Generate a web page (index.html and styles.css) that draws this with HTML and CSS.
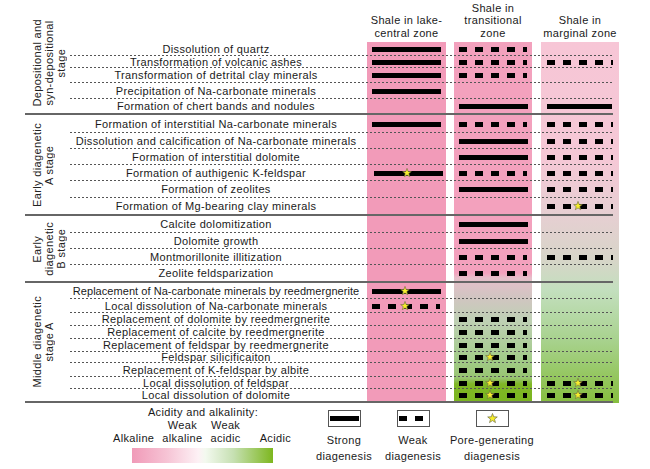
FILE: index.html
```html
<!DOCTYPE html>
<html lang="en">
<head>
<meta charset="utf-8">
<title>Diagenesis chart</title>
<link rel="stylesheet" href="styles.css">
</head>
<body>
<div class="chart">
  <div class="head h1">Shale in lake-<br>central zone</div>
  <div class="head h2">Shale in<br>transitional<br>zone</div>
  <div class="head h3">Shale in<br>marginal zone</div>

  <div class="zone z1"></div>
  <div class="zone z2"></div>
  <div class="zone z3"></div>

  <div class="sections">
    <div class="section">
      <div class="stage up"><span>Depositional and<br>syn-depositional<br>stage</span></div>
      <div class="rows">
        <div class="row h14"><div class="label">Dissolution of quartz</div><div class="cell c1"><i class="bar strong"></i></div><div class="cell c2"><i class="bar weak"></i></div><div class="cell c3"></div></div>
        <div class="row h12"><div class="label">Transformation of volcanic ashes</div><div class="cell c1"><i class="bar strong"></i></div><div class="cell c2"><i class="bar weak"></i></div><div class="cell c3"><i class="bar weak"></i></div></div>
        <div class="row h15"><div class="label">Transformation of detrital clay minerals</div><div class="cell c1"><i class="bar strong"></i></div><div class="cell c2"><i class="bar weak"></i></div><div class="cell c3"></div></div>
        <div class="row h16"><div class="label">Precipitation of Na-carbonate minerals</div><div class="cell c1"><i class="bar strong"></i></div><div class="cell c2"></div><div class="cell c3"></div></div>
        <div class="row h14"><div class="label">Formation of chert bands and nodules</div><div class="cell c1"></div><div class="cell c2"><i class="bar strong"></i></div><div class="cell c3"><i class="bar strong"></i></div></div>
      </div>
    </div>

    <div class="section">
      <div class="stage"><span>Early diagenetic<br>A stage</span></div>
      <div class="rows">
        <div class="row h18"><div class="label">Formation of interstitial Na-carbonate minerals</div><div class="cell c1"><i class="bar strong"></i></div><div class="cell c2"><i class="bar weak"></i></div><div class="cell c3"><i class="bar weak"></i></div></div>
        <div class="row h16"><div class="label">Dissolution and calcification of Na-carbonate minerals</div><div class="cell c1"></div><div class="cell c2"><i class="bar strong"></i></div><div class="cell c3"><i class="bar weak"></i></div></div>
        <div class="row h16"><div class="label">Formation of interstitial dolomite</div><div class="cell c1"></div><div class="cell c2"><i class="bar strong"></i></div><div class="cell c3"><i class="bar weak"></i></div></div>
        <div class="row h16"><div class="label">Formation of authigenic K-feldspar</div><div class="cell c1"><i class="bar strong shift"><svg class="star" viewBox="0 0 10 10"><polygon points="5,0.4 6.12,3.46 9.37,3.58 6.81,5.59 7.7,8.72 5,6.9 2.3,8.72 3.19,5.59 0.63,3.58 3.88,3.46"/></svg></i></div><div class="cell c2"><i class="bar weak"></i></div><div class="cell c3"><i class="bar weak"></i></div></div>
        <div class="row h17"><div class="label">Formation of zeolites</div><div class="cell c1"></div><div class="cell c2"><i class="bar strong"></i></div><div class="cell c3"><i class="bar weak"></i></div></div>
        <div class="row h16"><div class="label">Formation of Mg-bearing clay minerals</div><div class="cell c1"></div><div class="cell c2"></div><div class="cell c3"><i class="bar weak"><svg class="star" viewBox="0 0 10 10"><polygon points="5,0.4 6.12,3.46 9.37,3.58 6.81,5.59 7.7,8.72 5,6.9 2.3,8.72 3.19,5.59 0.63,3.58 3.88,3.46"/></svg></i></div></div>
      </div>
    </div>

    <div class="section">
      <div class="stage"><span>Early<br>diagenetic<br>B stage</span></div>
      <div class="rows">
        <div class="row h17"><div class="label">Calcite dolomitization</div><div class="cell c1"></div><div class="cell c2"><i class="bar strong"></i></div><div class="cell c3"></div></div>
        <div class="row h16"><div class="label">Dolomite growth</div><div class="cell c1"></div><div class="cell c2"><i class="bar strong"></i></div><div class="cell c3"></div></div>
        <div class="row h16"><div class="label">Montmorillonite illitization</div><div class="cell c1"></div><div class="cell c2"><i class="bar weak"></i></div><div class="cell c3"><i class="bar weak"></i></div></div>
        <div class="row h16"><div class="label">Zeolite feldsparization</div><div class="cell c1"></div><div class="cell c2"><i class="bar weak"></i></div><div class="cell c3"></div></div>
      </div>
    </div>

    <div class="section">
      <div class="stage"><span>Middle diagenetic<br>stage A</span></div>
      <div class="rows">
        <div class="row h16"><div class="label tight">Replacement of Na-carbonate minerals by reedmergnerite</div><div class="cell c1"><i class="bar strong"><svg class="star" viewBox="0 0 10 10"><polygon points="5,0.4 6.12,3.46 9.37,3.58 6.81,5.59 7.7,8.72 5,6.9 2.3,8.72 3.19,5.59 0.63,3.58 3.88,3.46"/></svg></i></div><div class="cell c2"></div><div class="cell c3"></div></div>
        <div class="row h14"><div class="label">Local dissolution of Na-carbonate minerals</div><div class="cell c1"><i class="bar weak"><svg class="star" viewBox="0 0 10 10"><polygon points="5,0.4 6.12,3.46 9.37,3.58 6.81,5.59 7.7,8.72 5,6.9 2.3,8.72 3.19,5.59 0.63,3.58 3.88,3.46"/></svg></i></div><div class="cell c2"></div><div class="cell c3"></div></div>
        <div class="row h13"><div class="label">Replacement of dolomite by reedmergnerite</div><div class="cell c1"></div><div class="cell c2"><i class="bar weak"></i></div><div class="cell c3"></div></div>
        <div class="row h13"><div class="label">Replacement of calcite by reedmergnerite</div><div class="cell c1"></div><div class="cell c2"><i class="bar weak"></i></div><div class="cell c3"></div></div>
        <div class="row h13"><div class="label">Replacement of feldspar by reedmergnerite</div><div class="cell c1"></div><div class="cell c2"><i class="bar weak"></i></div><div class="cell c3"></div></div>
        <div class="row h11"><div class="label">Feldspar silicificaiton</div><div class="cell c1"></div><div class="cell c2"><i class="bar weak"><svg class="star" viewBox="0 0 10 10"><polygon points="5,0.4 6.12,3.46 9.37,3.58 6.81,5.59 7.7,8.72 5,6.9 2.3,8.72 3.19,5.59 0.63,3.58 3.88,3.46"/></svg></i></div><div class="cell c3"></div></div>
        <div class="row h14"><div class="label">Replacement of K-feldspar by albite</div><div class="cell c1"></div><div class="cell c2"><i class="bar weak"></i></div><div class="cell c3"></div></div>
        <div class="row h12"><div class="label">Local dissolution of feldspar</div><div class="cell c1"></div><div class="cell c2"><i class="bar weak"><svg class="star" viewBox="0 0 10 10"><polygon points="5,0.4 6.12,3.46 9.37,3.58 6.81,5.59 7.7,8.72 5,6.9 2.3,8.72 3.19,5.59 0.63,3.58 3.88,3.46"/></svg></i></div><div class="cell c3"><i class="bar weak"><svg class="star" viewBox="0 0 10 10"><polygon points="5,0.4 6.12,3.46 9.37,3.58 6.81,5.59 7.7,8.72 5,6.9 2.3,8.72 3.19,5.59 0.63,3.58 3.88,3.46"/></svg></i></div></div>
        <div class="row h12"><div class="label">Local dissolution of dolomite</div><div class="cell c1"></div><div class="cell c2"><i class="bar weak"><svg class="star" viewBox="0 0 10 10"><polygon points="5,0.4 6.12,3.46 9.37,3.58 6.81,5.59 7.7,8.72 5,6.9 2.3,8.72 3.19,5.59 0.63,3.58 3.88,3.46"/></svg></i></div><div class="cell c3"><i class="bar weak"><svg class="star" viewBox="0 0 10 10"><polygon points="5,0.4 6.12,3.46 9.37,3.58 6.81,5.59 7.7,8.72 5,6.9 2.3,8.72 3.19,5.59 0.63,3.58 3.88,3.46"/></svg></i></div></div>
      </div>
    </div>
  </div>
</div>

<div class="legend">
  <div class="acid">
    <div class="acid-title">Acidity and alkalinity:</div>
    <div class="scale">
      <span>Alkaline</span>
      <span class="s-wa">Weak<br>alkaline</span>
      <span class="s-wc">Weak<br>acidic</span>
      <span class="s-ac">Acidic</span>
    </div>
    <div class="grad"></div>
  </div>
  <div class="key k-strong">
    <div class="box"><i class="kbar"></i></div>
    <div>Strong<br>diagenesis</div>
  </div>
  <div class="key k-weak">
    <div class="box left"><i class="kdash"></i></div>
    <div>Weak<br>diagenesis</div>
  </div>
  <div class="key k-pore">
    <div class="box"><svg class="kstar" viewBox="0 0 10 10"><polygon points="5,0.4 6.12,3.46 9.37,3.58 6.81,5.59 7.7,8.72 5,6.9 2.3,8.72 3.19,5.59 0.63,3.58 3.88,3.46"/></svg></div>
    <div>Pore-generating<br>diagenesis</div>
  </div>
</div>
</body>
</html>
```
FILE: styles.css
```css
* {
  box-sizing: border-box;
  margin: 0;
  padding: 0;
}

body {
  margin: 0;
  width: 650px;
  height: 469px;
  overflow: hidden;
  background: #fff;
  font-family: "Liberation Sans", Arial, sans-serif;
  font-size: 11px;
  letter-spacing: 0.35px;
  color: #1a1a1a;
}

.chart {
  display: grid;
  grid-template-columns: 45px 297px 79px 8px 78px 9px 78px;
  grid-template-rows: 42px auto;
  padding-left: 25px;
  width: 619px;
}

.head {
  grid-row: 1;
  align-self: end;
  text-align: center;
  line-height: 12.5px;
  padding-bottom: 3px;
  white-space: nowrap;
}
.h1 { grid-column: 3; }
.h2 { grid-column: 5; }
.h3 { grid-column: 7; }

.zone { grid-row: 2; }
.z1 {
  grid-column: 3;
  background: #f29bb9;
}
.z2 {
  grid-column: 5;
  background: linear-gradient(to bottom,
    #f3a1bd 0px, #f3a1bd 231px, #e6bfca 236px, #d3c4c2 253px,
    #bfd0b5 278px, #a2cb88 318px, #98c472 336px, #80b726 342px, #7ab51f 361px);
}
.z3 {
  grid-column: 7;
  background: linear-gradient(to bottom,
    #f7c6d6 0px, #f5c8d6 118px, #e6cfd2 173px, #d7d5c8 218px,
    #c3dfbe 248px, #a8d28e 298px, #86be3e 361px);
}

.sections {
  grid-row: 2;
  grid-column: 1 / -1;
  padding-right: 6px;
}

.section {
  display: flex;
  border-bottom: 2px solid #666;
}

.stage {
  width: 45px;
  flex: none;
  display: flex;
  align-items: center;
  padding-left: 6px;
}
.stage span {
  writing-mode: vertical-rl;
  transform: rotate(180deg);
  text-align: center;
  line-height: 12px;
  white-space: nowrap;
  color: #222;
}
.stage.up span { margin-top: -29px; }

.rows {
  flex: 1;
  display: flex;
  flex-direction: column;
}

.row {
  display: grid;
  grid-template-columns: 297px 87px 87px 72px;
  align-items: center;
  background: linear-gradient(to right, #555 2px, transparent 2px) 0 100% / 4px 1px repeat-x;
}
.row:last-child { background: none; }

.h11 { height: 11px; }
.h12 { height: 12px; }
.h13 { height: 13px; }
.h14 { height: 14px; }
.h15 { height: 15px; }
.h16 { height: 16px; }
.h17 { height: 17px; }
.h18 { height: 18px; }

.label {
  text-align: center;
  padding-right: 5px;
  white-space: nowrap;
  line-height: 11px;
}
.label.tight { letter-spacing: 0.05px; }

.cell {
  display: flex;
  align-items: center;
  padding-left: 5px;
}
.c3 { padding-left: 6px; }

.bar {
  display: block;
  position: relative;
  height: 5px;
}
.strong {
  width: 69px;
  background: #000;
}
.c3 .strong { width: 65px; }
.weak {
  width: 68px;
  background: repeating-linear-gradient(to right, #000 0 8px, transparent 8px 16px);
}
.shift { margin-left: 2px; }

.star {
  position: absolute;
  left: 26px;
  top: -3px;
  width: 10px;
  height: 10px;
}
.c1 .star { left: 28px; }
.star polygon,
.kstar polygon {
  fill: #f6ee2c;
  stroke: #6a6a40;
  stroke-width: 0.6;
}

.legend {
  display: flex;
  padding-left: 113px;
  padding-top: 3px;
}

.acid {
  width: 180px;
  display: flex;
  flex-direction: column;
  line-height: 13px;
}
.acid-title { text-align: center; }
.scale {
  display: flex;
  align-items: flex-end;
  text-align: center;
  white-space: nowrap;
}
.s-wa { margin-left: 8px; }
.s-wc { margin-left: 8px; }
.s-ac { margin-left: 19px; }
.grad {
  width: 141px;
  height: 15px;
  margin: 3px 0 0 19px;
  background: linear-gradient(to right,
    #f09ab8 0%, #f6c4d5 25%, #fdf1f5 47%, #f3f9ef 52%, #c6e0b2 72%, #7db71f 100%);
}

.key {
  display: flex;
  flex-direction: column;
  align-items: center;
  margin-top: 4px;
  line-height: 16px;
  text-align: center;
  white-space: nowrap;
}
.k-strong { width: 60px; margin-left: 21px; }
.k-weak { width: 60px; margin-left: 9px; }
.k-pore { width: 90px; margin-left: 4px; }

.box {
  width: 33px;
  height: 17px;
  border: 1px solid #555;
  display: flex;
  align-items: center;
  justify-content: center;
  margin-bottom: 5px;
  background: #fff;
}
.box.left {
  justify-content: flex-start;
  padding-left: 1px;
}
.kbar {
  display: block;
  width: 29px;
  height: 5px;
  background: #000;
}
.kdash {
  display: block;
  width: 24px;
  height: 5px;
  background: repeating-linear-gradient(to right, #000 0 8px, transparent 8px 16px);
}
.kstar {
  width: 11px;
  height: 11px;
}
```
